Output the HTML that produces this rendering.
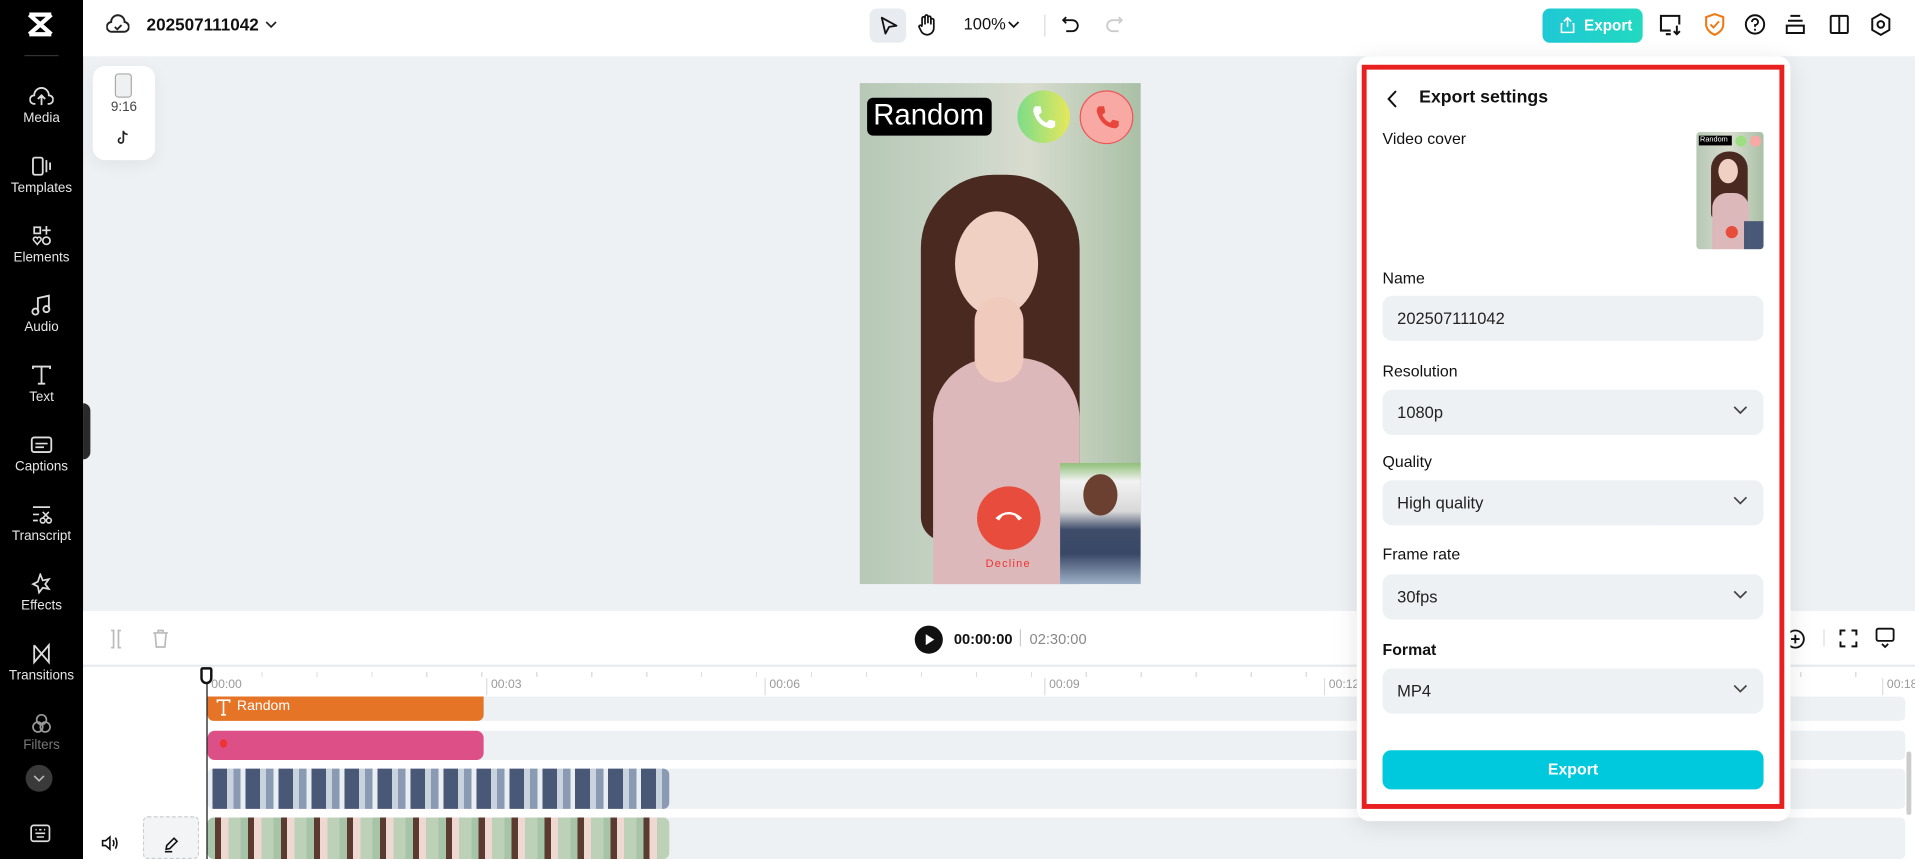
<!DOCTYPE html>
<html><head><meta charset="utf-8">
<style>
*{box-sizing:border-box;margin:0;padding:0}
html,body{width:1915px;height:859px;overflow:hidden;background:#eef1f4;font-family:"Liberation Sans",sans-serif}
#w{position:absolute;left:0;top:0;width:1568px;height:703px;transform:scale(1.2213,1.2219);transform-origin:0 0;background:#eef1f4;overflow:hidden}
.a{position:absolute}
.sb{left:0;top:0;width:68px;height:703px;background:#000}
.si{position:absolute;left:0;width:68px;text-align:center;color:#e6e6e6;font-size:11px}
.si svg{display:block;margin:0 auto 3px}
.top{left:68px;top:0;width:1500px;height:46px;background:#fff}
.ico{position:absolute}
.lbl{font-size:13px;font-weight:bold;color:#111}
.sel{position:absolute;left:16px;width:312px;height:37px;background:#eef1f4;border-radius:8px;font-size:13.5px;color:#222;padding:11px 12px}
.sel svg{position:absolute;right:13px;top:13px}
.trk{position:absolute;left:170px;right:8px;background:#eef1f4;border-radius:4px}
</style></head><body><div id="w">
<!-- sidebar -->
<div class="a sb">
 <svg class="ico" style="left:21px;top:9px" width="24" height="22" viewBox="0 0 24 22"><path d="M3 3 L21 19 M21 3 L3 19 M3 3 H21 M3 19 H21" stroke="#fff" stroke-width="3.5" fill="none"/></svg>
 <div class="a" style="left:20px;top:45px;width:28px;height:1px;background:#333"></div>
 <div class="si" style="top:70px"><svg width="20" height="18" viewBox="0 0 20 18"><path d="M5 15 H4 A3.5 3.5 0 0 1 4 8 A6 6 0 0 1 16 8 A3.5 3.5 0 0 1 16 15 H15 M10 16 V9 M7 11 L10 8 L13 11" stroke="#ddd" stroke-width="1.5" fill="none"/></svg>Media</div>
 <div class="si" style="top:127px"><svg width="20" height="18" viewBox="0 0 20 18"><rect x="3" y="2" width="8" height="14" rx="1.5" stroke="#ddd" stroke-width="1.5" fill="none"/><path d="M14 4 V14 M17 6 V12" stroke="#ddd" stroke-width="1.5"/></svg>Templates</div>
 <div class="si" style="top:184px"><svg width="20" height="18" viewBox="0 0 20 18"><rect x="4" y="2" width="5" height="5" stroke="#ddd" stroke-width="1.4" fill="none"/><path d="M14 1V8M10.5 4.5H17.5" stroke="#ddd" stroke-width="1.4"/><circle cx="14" cy="13" r="3" stroke="#ddd" stroke-width="1.4" fill="none"/><path d="M6.5 16 L3.5 12.5 A1.6 1.6 0 0 1 6.5 11 A1.6 1.6 0 0 1 9.5 12.5Z" stroke="#ddd" stroke-width="1.3" fill="none"/></svg>Elements</div>
 <div class="si" style="top:241px"><svg width="20" height="18" viewBox="0 0 20 18"><path d="M7 14 V3 L16 1 V12" stroke="#ddd" stroke-width="1.5" fill="none"/><circle cx="5" cy="14" r="2.5" stroke="#ddd" stroke-width="1.5" fill="none"/><circle cx="14" cy="12" r="2.5" stroke="#ddd" stroke-width="1.5" fill="none"/></svg>Audio</div>
 <div class="si" style="top:298px"><svg width="20" height="18" viewBox="0 0 20 18"><path d="M3 4 V2 H17 V4 M10 2 V16 M7 16 H13" stroke="#ddd" stroke-width="1.5" fill="none"/></svg>Text</div>
 <div class="si" style="top:355px"><svg width="20" height="18" viewBox="0 0 20 18"><rect x="2" y="3" width="16" height="12" rx="2" stroke="#ddd" stroke-width="1.5" fill="none"/><path d="M5 8H15M5 11H12" stroke="#ddd" stroke-width="1.4"/></svg>Captions</div>
 <div class="si" style="top:412px"><svg width="20" height="18" viewBox="0 0 20 18"><path d="M3 3H17M3 9H8M3 14H7" stroke="#ddd" stroke-width="1.4"/><circle cx="11" cy="14" r="2" stroke="#ddd" stroke-width="1.3" fill="none"/><circle cx="16" cy="14" r="2" stroke="#ddd" stroke-width="1.3" fill="none"/><path d="M11 7 L16 12 M16 7 L11 12" stroke="#ddd" stroke-width="1.3"/></svg>Transcript</div>
 <div class="si" style="top:469px"><svg width="20" height="18" viewBox="0 0 20 18"><path d="M9 1 L11 6 L16 5 L13 9 L16 13 L11 12 L8 16 L7 11 L3 9 L7 7Z" stroke="#ddd" stroke-width="1.4" fill="none"/></svg>Effects</div>
 <div class="si" style="top:526px"><svg width="20" height="18" viewBox="0 0 20 18"><path d="M4 2 V16 L16 2 V16 L4 2" stroke="#ddd" stroke-width="1.5" fill="none"/></svg>Transitions</div>
 <div class="si" style="top:583px;color:#777"><svg width="20" height="18" viewBox="0 0 20 18"><circle cx="10" cy="6" r="4" stroke="#999" stroke-width="1.4" fill="none"/><circle cx="7" cy="12" r="4" stroke="#999" stroke-width="1.4" fill="none"/><circle cx="13" cy="12" r="4" stroke="#999" stroke-width="1.4" fill="none"/></svg>Filters</div>
 <div class="a" style="left:21px;top:626px;width:22px;height:22px;border-radius:50%;background:#3a3a3a"><svg style="position:absolute;left:6px;top:8px" width="10" height="6" viewBox="0 0 10 6"><path d="M1 1L5 5L9 1" stroke="#bbb" stroke-width="1.3" fill="none"/></svg></div>
 <svg class="ico" style="left:24px;top:674px" width="18" height="16" viewBox="0 0 18 16"><rect x="1.5" y="1.5" width="15" height="13" rx="2" stroke="#ddd" stroke-width="1.4" fill="none"/><path d="M5 5H6M8 5H10M12 5H13M5 8H13M6 11H12" stroke="#ddd" stroke-width="1.3"/></svg>
</div>
<div class="a" style="left:68px;top:330px;width:6px;height:46px;background:#2a2a2a;border-radius:0 6px 6px 0"></div>
<!-- top bar -->
<div class="a top"></div>
<svg class="ico" style="left:87px;top:11px" width="19" height="18" viewBox="0 0 19 18"><path d="M5 15 A4 4 0 0 1 4 7 A5.5 5.5 0 0 1 15 7 A4 4 0 0 1 14 15 Z" stroke="#222" stroke-width="1.6" fill="none"/><path d="M7 11 L9 13 L12.5 9.5" stroke="#222" stroke-width="1.5" fill="none"/></svg>
<div class="a" style="left:120px;top:12px;font-size:14px;font-weight:bold;color:#111">202507111042</div>
<svg class="ico" style="left:217px;top:17px" width="10" height="6" viewBox="0 0 10 6"><path d="M1 1L5 5L9 1" stroke="#222" stroke-width="1.4" fill="none"/></svg>
<div class="a" style="left:712px;top:7px;width:30px;height:28px;border-radius:6px;background:#e8ebef"></div>
<svg class="ico" style="left:720px;top:13px" width="16" height="16" viewBox="0 0 16 16"><path d="M2 1.5 L14 8 L8 9 L5 14.5 Z" stroke="#111" stroke-width="1.5" fill="none" stroke-linejoin="round"/></svg>
<svg class="ico" style="left:751px;top:11px" width="17" height="19" viewBox="0 0 17 19"><path d="M4 10 V4 A1.2 1.2 0 0 1 6.4 4 V9 M6.4 8 V2.5 A1.2 1.2 0 0 1 8.8 2.5 V8 M8.8 8 V3.5 A1.2 1.2 0 0 1 11.2 3.5 V9 M11.2 9 V5.5 A1.2 1.2 0 0 1 13.6 5.5 V12 A5.5 5.5 0 0 1 3 14 L1.5 11 A1.2 1.2 0 0 1 3.5 10 L4 11" stroke="#111" stroke-width="1.4" fill="none"/></svg>
<div class="a" style="left:789px;top:12px;font-size:13.5px;color:#111">100%</div>
<svg class="ico" style="left:825px;top:17px" width="10" height="6" viewBox="0 0 10 6"><path d="M1 1L5 5L9 1" stroke="#111" stroke-width="1.4" fill="none"/></svg>
<div class="a" style="left:855px;top:12px;width:1px;height:18px;background:#ddd"></div>
<svg class="ico" style="left:869px;top:12px" width="16" height="16" viewBox="0 0 16 16"><path d="M4 2 L1.5 4.5 L4 7 M1.5 4.5 H9 A4.5 4.5 0 0 1 9 13.5 H4" stroke="#111" stroke-width="1.5" fill="none"/></svg>
<svg class="ico" style="left:904px;top:12px" width="16" height="16" viewBox="0 0 16 16"><path d="M12 2 L14.5 4.5 L12 7 M14.5 4.5 H7 A4.5 4.5 0 0 0 7 13.5 H12" stroke="#ccc" stroke-width="1.5" fill="none"/></svg>
<div class="a" style="left:1263px;top:7px;width:82px;height:28px;border-radius:6px;background:linear-gradient(90deg,#1fc8d6,#22d9c0);color:#fff;font-size:12.5px;font-weight:bold;padding:7px 0 0 34px">Export</div>
<svg class="ico" style="left:1277px;top:13px" width="13" height="15" viewBox="0 0 13 15"><path d="M6.5 9 V1.5 M3.5 4.5 L6.5 1.5 L9.5 4.5 M2.5 6.5 H1.5 V13.5 H11.5 V6.5 H10.5" stroke="#fff" stroke-width="1.3" fill="none"/></svg>
<svg class="ico" style="left:1358px;top:11px" width="20" height="19" viewBox="0 0 20 19"><path d="M10 14 H2 V2 H17 V9 M6 17 H10" stroke="#111" stroke-width="1.7" fill="none"/><path d="M15 10 V17 M12.5 14.5 L15 17 L17.5 14.5" stroke="#111" stroke-width="1.6" fill="none"/></svg>
<svg class="ico" style="left:1395px;top:10px" width="18" height="20" viewBox="0 0 18 20"><path d="M9 1.5 L16 4 V10 C16 14 12.5 17 9 18.5 C5.5 17 2 14 2 10 V4 Z" stroke="#f07a12" stroke-width="1.7" fill="none"/><path d="M5.5 10 L8 12.5 L12.5 7.5" stroke="#f07a12" stroke-width="1.6" fill="none"/></svg>
<svg class="ico" style="left:1428px;top:11px" width="18" height="18" viewBox="0 0 18 18"><circle cx="9" cy="9" r="7.5" stroke="#111" stroke-width="1.6" fill="none"/><path d="M6.5 7 A2.5 2.5 0 1 1 9 9.5 V11" stroke="#111" stroke-width="1.5" fill="none"/><circle cx="9" cy="13.3" r="0.9" fill="#111"/></svg>
<svg class="ico" style="left:1461px;top:11px" width="18" height="18" viewBox="0 0 18 18"><path d="M5 2 H13 M3 6 H15 M2 10 H16 V16 H2 Z" stroke="#111" stroke-width="1.6" fill="none"/></svg>
<svg class="ico" style="left:1497px;top:11px" width="18" height="18" viewBox="0 0 18 18"><rect x="2" y="2" width="14" height="14" rx="1" stroke="#111" stroke-width="1.6" fill="none"/><path d="M9 2V16" stroke="#111" stroke-width="1.6"/></svg>
<svg class="ico" style="left:1531px;top:10px" width="18" height="20" viewBox="0 0 18 20"><path d="M9 1.5 L16 5.5 V14.5 L9 18.5 L2 14.5 V5.5 Z" stroke="#111" stroke-width="1.6" fill="none"/><circle cx="9" cy="10" r="2.7" stroke="#111" stroke-width="1.6" fill="none"/></svg>
<!-- ratio card -->
<div class="a" style="left:76px;top:54px;width:51px;height:77px;background:#fff;border-radius:10px;box-shadow:0 4px 14px rgba(0,0,0,.06)"></div>
<div class="a" style="left:94px;top:60px;width:14px;height:20px;border:1px solid #aaa;border-radius:3px;background:#eef0f2"></div>
<div class="a" style="left:76px;top:82px;width:51px;text-align:center;font-size:11px;color:#444">9:16</div>
<svg class="ico" style="left:95px;top:106px" width="12" height="13" viewBox="0 0 12 13"><path d="M6 1 V9 A2 2 0 1 1 4 7 M6 1 C6 3 8 4 9.5 4" stroke="#222" stroke-width="1.4" fill="none"/></svg>
<!-- video -->
<div class="a" style="left:704px;top:68px;width:230px;height:410px;overflow:hidden;background:linear-gradient(90deg,#b7c8b6 0%,#c8d4c6 35%,#d8dccf 60%,#a9c0a6 100%)">
 <div class="a" style="left:50px;top:75px;width:130px;height:300px;border-radius:60px 60px 20px 20px;background:#4a2a20"></div>
 <div class="a" style="left:78px;top:105px;width:68px;height:86px;border-radius:50%;background:#f1d0c4"></div>
 <div class="a" style="left:60px;top:225px;width:120px;height:200px;border-radius:50px 50px 0 0;background:#dcb8ba"></div>
 <div class="a" style="left:94px;top:175px;width:40px;height:70px;background:#f0cbbd;border-radius:20px"></div>
 <div class="a" style="left:6px;top:12px;width:102px;height:31px;background:#000;border-radius:5px;color:#fff;font-size:24px;padding:1px 0 0 5px">Random</div>
 <div class="a" style="left:129px;top:6px;width:43px;height:43px;border-radius:50%;background:linear-gradient(90deg,#7ddc8a,#e6e85a)"></div>
 <div class="a" style="left:180px;top:6px;width:44px;height:44px;border-radius:50%;background:#f8a9a4;border:1px solid #e55"></div>
 <svg class="ico" style="left:139px;top:16px" width="24" height="24" viewBox="0 0 24 24"><path d="M5 3 L9 3 L10 8 L7.5 10 Q10 15 14 16.5 L16 14 L21 15 L21 19 Q20 21 17 21 Q6 19 3 7 Q3 4 5 3Z" fill="#fff"/></svg>
 <svg class="ico" style="left:191px;top:16px" width="24" height="24" viewBox="0 0 24 24"><path d="M5 3 L9 3 L10 8 L7.5 10 Q10 15 14 16.5 L16 14 L21 15 L21 19 Q20 21 17 21 Q6 19 3 7 Q3 4 5 3Z" fill="#e8463c"/></svg>
 <div class="a" style="left:96px;top:330px;width:52px;height:52px;border-radius:50%;background:#e74c3c"></div>
 <svg class="ico" style="left:109px;top:346px" width="26" height="14" viewBox="0 0 26 14"><path d="M2 10 Q13 0 24 10 L21 12 L18 8 Q13 6 8 8 L5 12Z" fill="#fff"/></svg>
 <div class="a" style="left:103px;top:388px;font-size:9px;color:#e33;letter-spacing:1px">Decline</div>
 <div class="a" style="left:164px;top:311px;width:66px;height:99px;background:linear-gradient(180deg,#8fbf77 0%,#f2f2f2 15%,#d8d8d8 40%,#3f4d6a 55%,#3a4868 75%,#9db0c6 100%)"></div>
 <div class="a" style="left:183px;top:320px;width:28px;height:34px;border-radius:50%;background:#6b4030"></div>
</div>
<!-- bottom toolbar -->
<div class="a" style="left:68px;top:500px;width:1500px;height:45px;background:#fff;border-bottom:1px solid #e4e6ea"></div>
<svg class="ico" style="left:88px;top:515px" width="14" height="16" viewBox="0 0 14 16"><path d="M3 1 H5 V15 H3 M11 1 H9 V15 H11" stroke="#bbb" stroke-width="1.4" fill="none"/></svg>
<svg class="ico" style="left:124px;top:514px" width="15" height="17" viewBox="0 0 15 17"><path d="M1.5 4H13.5M5.5 4V2H9.5V4M3 4 L4 15.5 H11 L12 4" stroke="#bbb" stroke-width="1.4" fill="none"/></svg>
<div class="a" style="left:749px;top:512px;width:23px;height:23px;border-radius:50%;background:#111"></div>
<svg class="ico" style="left:757px;top:518px" width="9" height="11" viewBox="0 0 9 11"><path d="M1 1L8 5.5L1 10Z" fill="#fff"/></svg>
<div class="a" style="left:781px;top:516px;font-size:12px;font-weight:bold;color:#111">00:00:00</div>
<div class="a" style="left:835px;top:515px;width:1px;height:14px;background:#ccc"></div>
<div class="a" style="left:843px;top:516px;font-size:12px;color:#888">02:30:00</div>
<svg class="ico" style="left:1461px;top:514px" width="18" height="18" viewBox="0 0 18 18"><circle cx="9" cy="9" r="7" stroke="#111" stroke-width="1.5" fill="none"/><path d="M9 5.5V12.5M5.5 9H12.5" stroke="#111" stroke-width="1.5"/></svg>
<div class="a" style="left:1493px;top:515px;width:1px;height:14px;background:#ddd"></div>
<svg class="ico" style="left:1505px;top:514px" width="17" height="17" viewBox="0 0 17 17"><path d="M2 6V2H6M11 2H15V6M15 11V15H11M6 15H2V11" stroke="#111" stroke-width="1.6" fill="none"/></svg>
<svg class="ico" style="left:1535px;top:513px" width="17" height="18" viewBox="0 0 17 18"><rect x="1.5" y="1.5" width="14" height="10" rx="1.5" stroke="#111" stroke-width="1.5" fill="none"/><path d="M6 14 L8.5 16.5 L11 14" stroke="#111" stroke-width="1.5" fill="none"/></svg>
<!-- timeline -->
<div class="a" style="left:68px;top:546px;width:1500px;height:157px;background:#fff"></div>
<div class="a" style="left:173px;top:555px;font-size:10px;color:#999">00:00</div>
<div class="a" style="left:398px;top:555px;font-size:10px;color:#999;border-left:1px solid #ddd;padding-left:3px;height:14px">00:03</div>
<div class="a" style="left:626px;top:555px;font-size:10px;color:#999;border-left:1px solid #ddd;padding-left:3px;height:14px">00:06</div>
<div class="a" style="left:855px;top:555px;font-size:10px;color:#999;border-left:1px solid #ddd;padding-left:3px;height:14px">00:09</div>
<div class="a" style="left:1084px;top:555px;font-size:10px;color:#999;border-left:1px solid #ddd;padding-left:3px;height:14px">00:12</div>
<div class="a" style="left:1541px;top:555px;font-size:10px;color:#999;border-left:1px solid #ddd;padding-left:3px;height:14px">00:18</div>
<div class="a" style="left:170px;top:550px;width:1390px;height:4px;background:repeating-linear-gradient(90deg,transparent 0 44px,#ddd 44px 45px)"></div>
<div class="trk" style="top:570px;height:20px"></div>
<div class="trk" style="top:598px;height:24px"></div>
<div class="trk" style="top:629px;height:33px"></div>
<div class="trk" style="top:669px;height:34px"></div>
<div class="a" style="left:170px;top:570px;width:226px;height:20px;background:#e67426;border-radius:0 0 5px 5px;color:#fff;font-size:11.5px;padding:2px 0 0 24px">Random</div>
<svg class="ico" style="left:177px;top:572px" width="12" height="14" viewBox="0 0 12 14"><path d="M1 3V1H11V3M6 1V13M4 13H8" stroke="#fff" stroke-width="1.3" fill="none"/></svg>
<div class="a" style="left:170px;top:598px;width:226px;height:24px;background:#dd5087;border-radius:6px"></div>
<div class="a" style="left:180px;top:605px;width:6px;height:7px;border-radius:50%;background:#e33"></div>
<div class="a" style="left:170px;top:629px;width:378px;height:33px;border-radius:5px;background:repeating-linear-gradient(90deg,#e8eef2 0 4px,#4a5878 4px 16px,#c9d3de 16px 21px,#8a9ab2 21px 27px)"></div>
<div class="a" style="left:170px;top:669px;width:378px;height:34px;border-radius:5px;background:repeating-linear-gradient(90deg,#a8c4a8 0 6px,#5b3a30 6px 11px,#efd7d2 11px 17px,#bcd1b8 17px 27px)"></div>
<div class="a" style="left:117px;top:668px;width:46px;height:35px;border:1px dashed #ccc;border-radius:4px;background:#f2f4f6"></div>
<svg class="ico" style="left:133px;top:684px" width="14" height="14" viewBox="0 0 14 14"><path d="M3 11 L3.5 8 L9.5 2 L12 4.5 L6 10.5 Z M2 13H8" stroke="#111" stroke-width="1.3" fill="none"/></svg>
<svg class="ico" style="left:82px;top:683px" width="16" height="14" viewBox="0 0 16 14"><path d="M2 5H4.5L8 2V12L4.5 9H2Z M10.5 4.5Q12 7 10.5 9.5 M12.5 2.5Q15 7 12.5 11.5" stroke="#111" stroke-width="1.3" fill="none"/></svg>
<div class="a" style="left:169px;top:556px;width:1px;height:147px;background:#111"></div>
<div class="a" style="left:164px;top:546px;width:10px;height:14px;border:2px solid #111;border-radius:2px 2px 5px 5px;background:#fff"></div>
<div class="a" style="left:1561px;top:615px;width:4px;height:52px;background:#ccc;border-radius:2px"></div>
<!-- export panel -->
<div class="a" style="left:1111px;top:46px;width:355px;height:626px;background:#fff;border-radius:10px;box-shadow:0 4px 20px rgba(0,0,0,.1)"></div>
<div class="a" style="left:1115px;top:53px;width:346px;height:609px;border:4.5px solid #e82020"></div>
<div class="a" style="left:1116px;top:53px;width:344px;height:608px">
 <svg class="ico" style="left:19px;top:20px" width="10" height="16" viewBox="0 0 10 16"><path d="M8 1.5 L2 8 L8 14.5" stroke="#111" stroke-width="1.6" fill="none"/></svg>
 <div class="a" style="left:46px;top:19px;font-size:14.5px;font-weight:bold;color:#111">Export settings</div>
 <div class="a" style="left:16px;top:53px;font-size:13px;color:#111">Video cover</div>
 <div class="a" style="left:273px;top:55px;width:55px;height:96px;border-radius:3px;overflow:hidden;background:linear-gradient(90deg,#b7c8b6,#d8dccf,#a9c0a6)">
  <div class="a" style="left:12px;top:16px;width:30px;height:55px;border-radius:14px 14px 4px 4px;background:#4a2a20"></div>
  <div class="a" style="left:18px;top:22px;width:16px;height:20px;border-radius:50%;background:#f1d0c4"></div>
  <div class="a" style="left:13px;top:50px;width:30px;height:46px;border-radius:12px 12px 0 0;background:#dcb8ba"></div>
  <div class="a" style="left:2px;top:3px;width:27px;height:8px;background:#000;color:#fff;font-size:6px;line-height:8px;padding-left:1px">Random</div>
  <div class="a" style="left:32px;top:3px;width:9px;height:9px;border-radius:50%;background:#9ddf80"></div>
  <div class="a" style="left:44px;top:3px;width:9px;height:9px;border-radius:50%;background:#f8a9a4"></div>
  <div class="a" style="left:24px;top:77px;width:10px;height:10px;border-radius:50%;background:#e74c3c"></div>
  <div class="a" style="left:39px;top:73px;width:16px;height:23px;background:#4a5878"></div>
 </div>
 <div class="a" style="left:16px;top:167px;font-size:13px;color:#111">Name</div>
 <div class="sel" style="top:189px">202507111042</div>
 <div class="a" style="left:16px;top:243px;font-size:13px;color:#111">Resolution</div>
 <div class="sel" style="top:266px">1080p<svg width="12" height="7" viewBox="0 0 12 7"><path d="M1 1L6 6L11 1" stroke="#444" stroke-width="1.4" fill="none"/></svg></div>
 <div class="a" style="left:16px;top:317px;font-size:13px;color:#111">Quality</div>
 <div class="sel" style="top:340px">High quality<svg width="12" height="7" viewBox="0 0 12 7"><path d="M1 1L6 6L11 1" stroke="#444" stroke-width="1.4" fill="none"/></svg></div>
 <div class="a" style="left:16px;top:393px;font-size:13px;color:#111">Frame rate</div>
 <div class="sel" style="top:417px">30fps<svg width="12" height="7" viewBox="0 0 12 7"><path d="M1 1L6 6L11 1" stroke="#444" stroke-width="1.4" fill="none"/></svg></div>
 <div class="a" style="left:16px;top:471px;font-size:13px;font-weight:bold;color:#111">Format</div>
 <div class="sel" style="top:494px">MP4<svg width="12" height="7" viewBox="0 0 12 7"><path d="M1 1L6 6L11 1" stroke="#444" stroke-width="1.4" fill="none"/></svg></div>
 <div class="a" style="left:16px;top:561px;width:312px;height:32px;border-radius:7px;background:#00c8dd;color:#fff;font-size:13px;font-weight:bold;text-align:center;line-height:32px">Export</div>
</div>
</div></body></html>
